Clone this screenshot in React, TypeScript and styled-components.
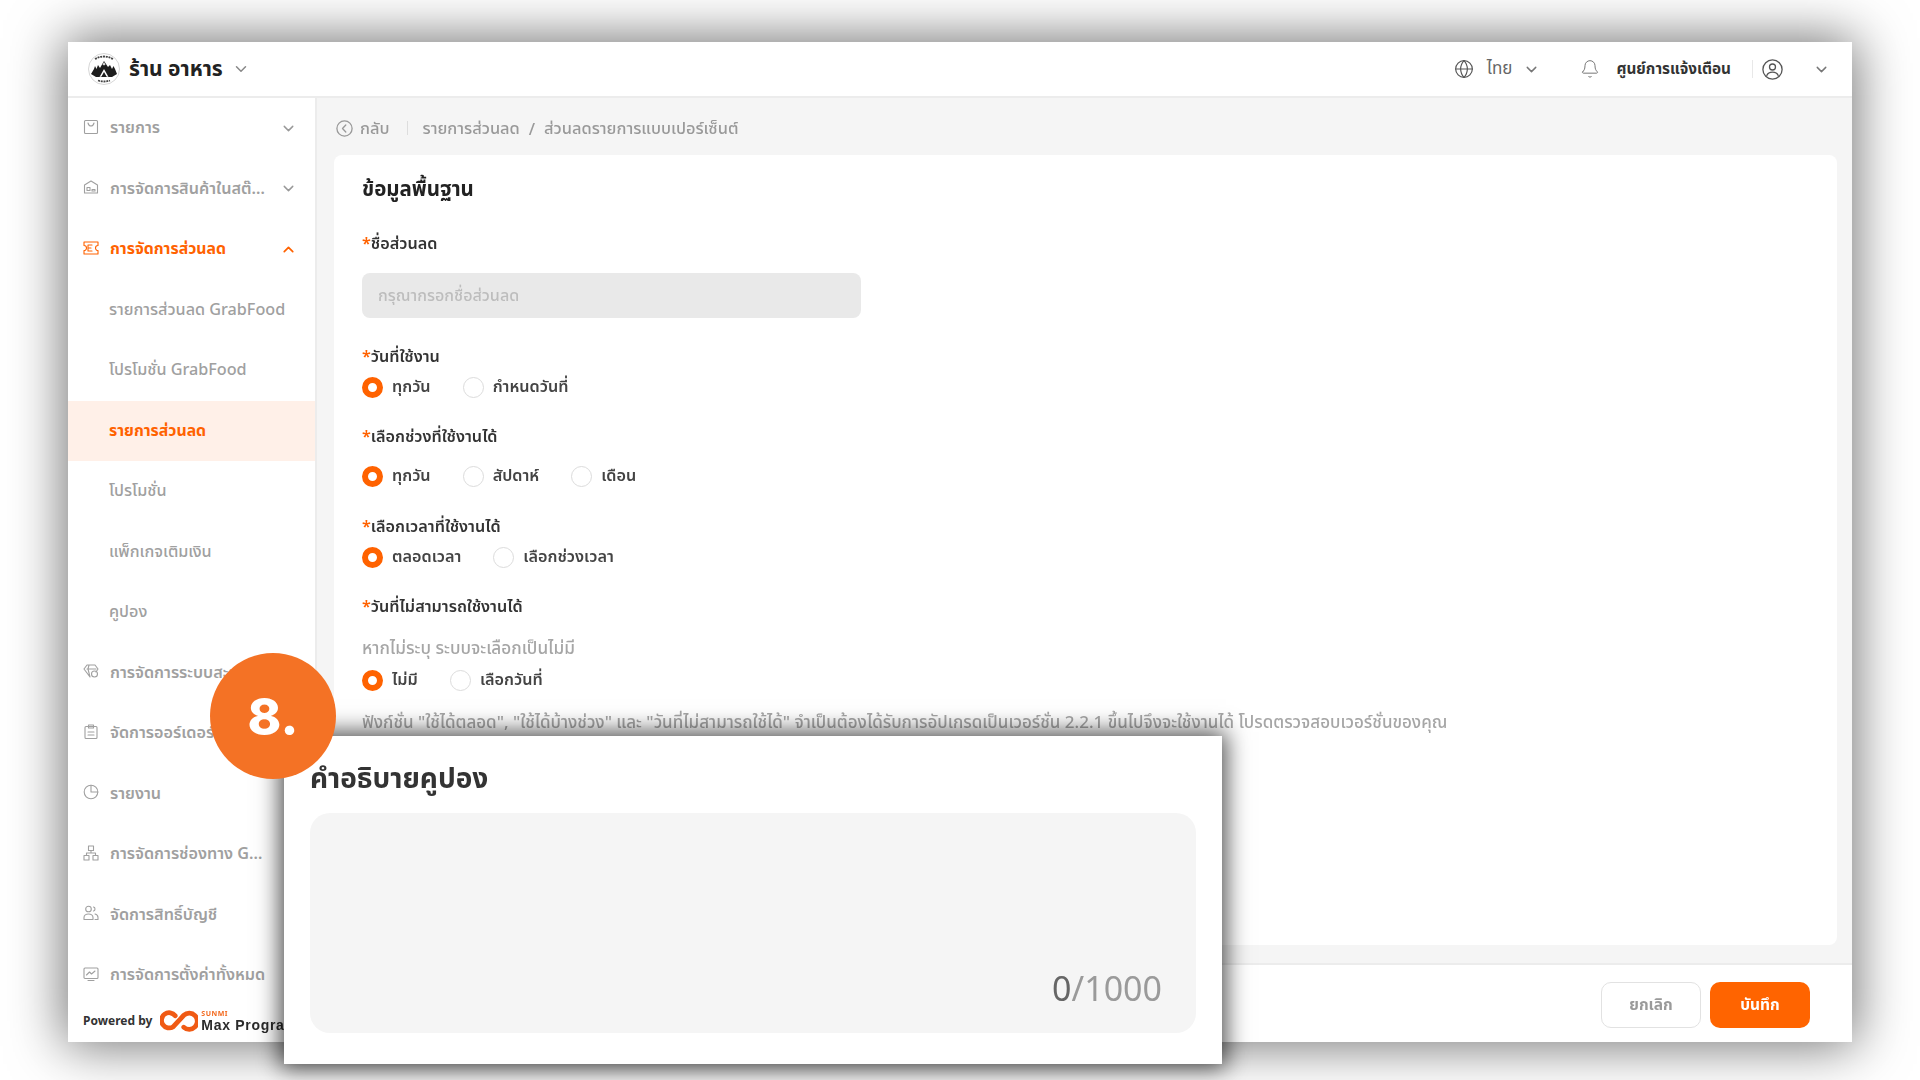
import React from "react";
import styled, { createGlobalStyle } from "styled-components";
import { Bell, ChevronDown, ChevronUp, Globe } from "lucide-react";

const Global = createGlobalStyle`
  html, body { margin: 0; padding: 0; background: #fff; }
  body { font-family: "Noto Sans", "Noto Sans Thai", "Inter", "DejaVu Sans", sans-serif; }
  #root { width: 1920px; height: 1080px; overflow: hidden; }
  * { box-sizing: border-box; }
`;

const Page = styled.div`
  position: relative;
  width: 1920px;
  height: 1080px;
  padding: 42px 68px 38px;
  overflow: hidden;
  filter: blur(0.35px);
`;
const Win = styled.div`
  width: 1784px;
  height: 1000px;
  display: flex;
  flex-direction: column;
  background: #f5f5f5;
  box-shadow: 0 0 50px 4px rgba(0, 0, 0, 0.55);
`;
const Header = styled.header`
  height: 56px;
  flex: none;
  display: flex;
  align-items: center;
  background: #fff;
  border-bottom: 2px solid #ececec;
  padding: 0 22px 0 20px;
  color: #444;
`;
const StoreName = styled.span`
  font-size: 21px;
  font-weight: 700;
  color: #222;
  margin-left: 9px;
  margin-right: 9px;
`;
const Spacer = styled.div`
  flex: 1;
`;
const Lang = styled.span`
  font-size: 17px;
  color: #666;
  margin: 0 11px 0 13px;
`;
const NoticeText = styled.span`
  font-size: 15.3px;
  font-weight: 700;
  color: #333;
  margin-left: 16px;
`;
const Divider = styled.span`
  width: 1px;
  height: 18px;
  background: #e8e8e8;
  margin: 0 9px 0 21px;
`;
const Body = styled.div`
  flex: 1;
  min-height: 0;
  display: flex;
`;
const Side = styled.aside`
  width: 249px;
  flex: none;
  background: #fff;
  border-right: 2px solid #ececec;
  display: flex;
  flex-direction: column;
`;
const Row = styled.div<{ $active?: boolean; $selected?: boolean }>`
  height: 60.5px;
  flex: none;
  display: flex;
  align-items: center;
  padding: 0 18px 0 15px;
  gap: 11px;
  font-size: ${(p) => (p.$active ? 15.8 : 16.2)}px;
  font-weight: ${(p) => (p.$active ? 700 : 600)};
  color: ${(p) => (p.$active || p.$selected ? "#ff6200" : "#a0a0a0")};
  background: ${(p) => (p.$selected ? "#fff0e8" : "transparent")};
  white-space: nowrap;
  svg { flex: none; }
`;
const SubRow = styled(Row)`
  padding-left: 41px;
  font-weight: ${(p) => (p.$selected ? 700 : 500)};
  font-size: ${(p) => (p.$selected ? 15.8 : 16.2)}px;
`;
const RowText = styled.span`
  max-width: 158px;
  overflow: hidden;
  text-overflow: ellipsis;
`;
const ChevSlot = styled.span`
  margin-left: auto;
  display: flex;
`;
const Powered = styled.div`
  display: flex;
  align-items: center;
  padding: 3px 0 0 15px;
  font-size: 12px;
  font-weight: 700;
  color: #333;
  white-space: nowrap;
`;
const Brand = styled.div`
  display: flex;
  flex-direction: column;
  margin-left: 3px;
  line-height: 1;
`;
const BrandTop = styled.span`
  font-size: 7px;
  letter-spacing: 0.5px;
  color: #f36a1f;
  margin-bottom: 1px;
`;
const BrandName = styled.span`
  font-family: "Liberation Sans", sans-serif;
  font-size: 14px;
  font-weight: 700;
  letter-spacing: 0.7px;
  color: #2b2b2b;
`;
const Main = styled.div`
  flex: 1;
  min-width: 0;
  display: flex;
  flex-direction: column;
`;
const Crumbs = styled.div`
  height: 57px;
  flex: none;
  display: flex;
  align-items: center;
  padding: 3px 0 0 19px;
  font-size: 16.4px;
  color: #999;
  font-weight: 500;
`;
const Back = styled.span`
  margin-left: 7px;
`;
const CrumbBar = styled.span`
  width: 1px;
  height: 14px;
  background: #ddd;
  margin: 0 15px 0 17px;
`;
const Slash = styled.span`
  margin: 0 9px;
`;
const Card = styled.section`
  height: 790px;
  flex: none;
  margin: 0 15px 0 17px;
  background: #fff;
  border-radius: 8px;
  padding: 21px 28px;
`;
const Title = styled.h2`
  margin: 0;
  height: 24px;
  line-height: 24px;
  font-size: 20.5px;
  font-weight: 700;
  color: #222;
`;
const Label = styled.div<{ $mt: number }>`
  margin-top: ${(p) => p.$mt}px;
  height: 22px;
  line-height: 22px;
  font-size: 16.2px;
  font-weight: 600;
  color: #333;
  &::before {
    content: "*";
    color: #ff6200;
  }
`;
const Input = styled.div`
  margin-top: 19px;
  width: 499px;
  height: 45px;
  border-radius: 8px;
  background: #e9e9e9;
  color: #bdbdbd;
  font-size: 16.1px;
  font-weight: 500;
  line-height: 45px;
  padding-left: 16px;
`;
const Radios = styled.div<{ $mt: number }>`
  margin-top: ${(p) => p.$mt}px;
  height: 24px;
  display: flex;
  align-items: center;
  gap: 32px;
`;
const RadioItem = styled.label`
  display: flex;
  align-items: center;
  gap: 9px;
  font-size: 16.2px;
  font-weight: 600;
  color: #444;
`;
const Dot = styled.span<{ $on?: boolean }>`
  width: 21px;
  height: 21px;
  border-radius: 50%;
  background: #fff;
  border: ${(p) => (p.$on ? "6.5px solid #ff6200" : "1.5px solid #dcdcdc")};
`;
const Hint = styled.div<{ $mt: number; $size: number }>`
  margin-top: ${(p) => p.$mt}px;
  height: 22px;
  line-height: 22px;
  font-size: ${(p) => p.$size}px;
  font-weight: 500;
  color: #a6a6a6;
  white-space: nowrap;
`;
const Footer = styled.footer`
  margin-top: 18px;
  flex: 1;
  display: flex;
  align-items: flex-start;
  justify-content: flex-end;
  gap: 9px;
  padding: 17px 42px 0 0;
  background: #fff;
  border-top: 2px solid #ececec;
`;
const Btn = styled.button<{ $primary?: boolean }>`
  width: 100px;
  height: 46px;
  border-radius: 10px;
  font-family: inherit;
  font-size: 15.5px;
  font-weight: 700;
  border: ${(p) => (p.$primary ? "none" : "1.5px solid #e2e2e2")};
  background: ${(p) => (p.$primary ? "#ff6400" : "#fff")};
  color: ${(p) => (p.$primary ? "#fff" : "#9a9a9a")};
`;
const Modal = styled.div`
  position: absolute;
  left: 284px;
  top: 736px;
  width: 938px;
  height: 328px;
  background: #fff;
  padding: 21px 26px;
  box-shadow: 0 0 22px 4px rgba(0, 0, 0, 0.7);
  display: flex;
  flex-direction: column;
`;
const ModalTitle = styled.h3`
  margin: 0;
  height: 40px;
  line-height: 40px;
  font-size: 28px;
  font-weight: 700;
  color: #333;
`;
const TextBox = styled.div`
  margin-top: 16px;
  height: 220px;
  border-radius: 20px;
  background: #f5f5f5;
  display: flex;
  align-items: flex-end;
  justify-content: flex-end;
  padding: 0 34px 23px 0;
  font-size: 34px;
  color: #9a9a9a;
  line-height: 44px;
`;
const CountNow = styled.span`
  color: #666;
`;
const Badge = styled.div`
  position: absolute;
  left: 210px;
  top: 653px;
  width: 126px;
  height: 126px;
  border-radius: 50%;
  background: #f47225;
  color: #fff;
  display: flex;
  align-items: center;
  justify-content: center;
  font-family: "Inter", sans-serif;
  font-size: 51px;
  font-weight: 800;
`;

type IconP = { d: React.ReactNode };
const Ico = ({ d }: IconP) => (
  <svg width="16" height="16" viewBox="0 0 16 16" fill="none" stroke="currentColor" strokeWidth="1.1" strokeLinecap="round" strokeLinejoin="round" style={{ marginTop: -3 }}>
    {d}
  </svg>
);
const icons = {
  bag: <><rect x="1.500" y="1.500" width="13" height="13" rx="1" /><path d="M5 4c.5 2 1.500 3 3 3s2.500-1 3-3" /></>,
  store: <><path d="M1.500 14V6l6.500-4 6.500 4v8z" /><rect x="4" y="8.500" width="3" height="3" /><path d="M9 10.500h3v1.500H9z" /></>,
  ticket: <><path d="M1 2h14v3.500a2.500 2.500 0 0 0 0 5V14H1v-3.500a2.500 2.500 0 0 0 0-5z" /><path d="M5 5h4M5 8h3M5 11h4M5 5v6" /></>,
  points: <><path d="M4 2h8l3 4-2 3M1 6l3-4M1 6l6 8M4 6h9M6 2 5 6l2 8" /><circle cx="11.500" cy="11" r="3" /></>,
  order: <><rect x="2" y="2.500" width="12" height="12" rx="1" /><rect x="5.500" y="1" width="5" height="3" /><path d="M5 8h6M5 11h6" /></>,
  report: <><circle cx="8" cy="8" r="6.800" /><path d="M8 1.200V8h6.800" /></>,
  tree: <><rect x="5.500" y="1" width="5" height="4.500" /><rect x="1" y="10.500" width="5" height="4.500" /><rect x="10" y="10.500" width="5" height="4.500" /><path d="M8 5.500V8M3.500 10.500V8h9v2.500" /></>,
  users: <><circle cx="5.500" cy="4" r="2.800" /><path d="M1 14.500v-2c0-2 2-3.500 4.500-3.500S10 10.500 10 12.500v2zM10.500 2c2 .5 2 3.500 0 4M12 9c2 .5 3 1.700 3 3.500v2h-3" /></>,
  monitor: <><rect x="1" y="2" width="14" height="10.500" rx="1" /><path d="M3.500 9l3-3 2 2 3.500-3M5 14.500h6" /></>,
};

const Logo = () => (
  <svg width="32" height="32" viewBox="0 0 32 32">
    <circle cx="16" cy="16" r="15.500" fill="#fff" stroke="#bbb" strokeWidth=".6" />
    <path d="M3 21 6 16 7 13 8.500 16 10 12 12 15 16 8 20 14 22 12 24 16 25.500 13 27 16 29 21 24 24H8z" fill="#1d1d1d" />
    <path d="M14.500 11.500 16 9l1.500 2.500-1.500 1z" fill="#ddd" />
    <path d="M11.500 24 16 16l4.500 8-2-.5L16 19l-2.500 4.500z" fill="#fff" />
    <path d="M7 6q9-5 18 0" fill="none" stroke="#444" strokeWidth="1.800" strokeDasharray="2 .8" />
    <path d="M10 27.500q6 2 12 0" fill="none" stroke="#444" strokeWidth="1.800" strokeDasharray="2 .8" />
  </svg>
);
const UserCircle = () => (
  <svg width="21" height="21" viewBox="0 0 21 21" fill="none" stroke="#555" strokeWidth="1.300" strokeLinecap="round">
    <circle cx="10.500" cy="10.500" r="9.600" />
    <circle cx="10.500" cy="8" r="3" />
    <path d="M4.800 16.500c1-2.500 3-3.300 5.700-3.300s4.700.8 5.700 3.300" />
  </svg>
);
const BackIcon = () => (
  <svg width="17" height="17" viewBox="0 0 17 17" fill="none" stroke="#999" strokeWidth="1.300" strokeLinecap="round" strokeLinejoin="round">
    <circle cx="8.500" cy="8.500" r="7.600" />
    <path d="M9.800 5 6.500 8.500l3.300 3.500" />
  </svg>
);
const Infinity8 = () => (
  <svg width="38" height="24" viewBox="0 0 40 24" fill="none" stroke="#f05a14" strokeWidth="5" strokeLinecap="round" style={{ marginLeft: 8 }}>
    <path d="M16 6.500A8 8 0 1 0 14 18l11-12a8.500 8.500 0 1 1 0 12.500" />
  </svg>
);

const Chev = () => <ChevronDown size={17} strokeWidth={2} color="#999" />;

const NavRow = ({ icon, text, active, chev }: { icon: keyof typeof icons; text: string; active?: boolean; chev?: "up" | "down" }) => (
  <Row $active={active}>
    <Ico d={icons[icon]} />
    <RowText>{text}</RowText>
    {chev && (
      <ChevSlot>
        {chev === "down" ? <Chev /> : <ChevronUp size={17} strokeWidth={2.4} color="#ff6200" />}
      </ChevSlot>
    )}
  </Row>
);

const Radio = ({ on, children }: { on?: boolean; children: string }) => (
  <RadioItem>
    <Dot $on={on} />
    {children}
  </RadioItem>
);

export default function App() {
  return (
    <Page>
      <Global />
      <Win>
        <Header>
          <Logo />
          <StoreName>ร้าน อาหาร</StoreName>
          <ChevronDown size={18} strokeWidth={2} color="#888" />
          <Spacer />
          <Globe size={20} strokeWidth={1.4} color="#555" />
          <Lang>ไทย</Lang>
          <ChevronDown size={17} strokeWidth={2} color="#777" style={{ marginRight: 40 }} />
          <Bell size={20} strokeWidth={1.2} color="#777" />
          <NoticeText>ศูนย์การแจ้งเตือน</NoticeText>
          <Divider />
          <UserCircle />
          <ChevronDown size={17} strokeWidth={2} color="#777" style={{ marginLeft: 30 }} />
        </Header>
        <Body>
          <Side>
            <NavRow icon="bag" text="รายการ" chev="down" />
            <NavRow icon="store" text="การจัดการสินค้าในสต๊อก" chev="down" />
            <NavRow icon="ticket" text="การจัดการส่วนลด" active chev="up" />
            <SubRow>รายการส่วนลด GrabFood</SubRow>
            <SubRow>โปรโมชั่น GrabFood</SubRow>
            <SubRow $selected>รายการส่วนลด</SubRow>
            <SubRow>โปรโมชั่น</SubRow>
            <SubRow>แพ็กเกจเติมเงิน</SubRow>
            <SubRow>คูปอง</SubRow>
            <NavRow icon="points" text="การจัดการระบบสะสมแต้ม" />
            <NavRow icon="order" text="จัดการออร์เดอร์" />
            <NavRow icon="report" text="รายงาน" />
            <NavRow icon="tree" text="การจัดการช่องทาง GrabFood" />
            <NavRow icon="users" text="จัดการสิทธิ์บัญชี" />
            <NavRow icon="monitor" text="การจัดการตั้งค่าทั้งหมด" />
            <Powered>
              Powered by
              <Infinity8 />
              <Brand>
                <BrandTop>SUNMI</BrandTop>
                <BrandName>Max Program</BrandName>
              </Brand>
            </Powered>
          </Side>
          <Main>
            <Crumbs>
              <BackIcon />
              <Back>กลับ</Back>
              <CrumbBar />
              รายการส่วนลด
              <Slash>/</Slash>
              ส่วนลดรายการแบบเปอร์เซ็นต์
            </Crumbs>
            <Card>
              <Title>ข้อมูลพื้นฐาน</Title>
              <Label $mt={32}>ชื่อส่วนลด</Label>
              <Input>กรุณากรอกชื่อส่วนลด</Input>
              <Label $mt={27}>วันที่ใช้งาน</Label>
              <Radios $mt={8}>
                <Radio on>ทุกวัน</Radio>
                <Radio>กำหนดวันที่</Radio>
              </Radios>
              <Label $mt={26}>เลือกช่วงที่ใช้งานได้</Label>
              <Radios $mt={17}>
                <Radio on>ทุกวัน</Radio>
                <Radio>สัปดาห์</Radio>
                <Radio>เดือน</Radio>
              </Radios>
              <Label $mt={27}>เลือกเวลาที่ใช้งานได้</Label>
              <Radios $mt={8}>
                <Radio on>ตลอดเวลา</Radio>
                <Radio>เลือกช่วงเวลา</Radio>
              </Radios>
              <Label $mt={26}>วันที่ไม่สามารถใช้งานได้</Label>
              <Hint $mt={20} $size={17.2}>หากไม่ระบุ ระบบจะเลือกเป็นไม่มี</Hint>
              <Radios $mt={9}>
                <Radio on>ไม่มี</Radio>
                <Radio>เลือกวันที่</Radio>
              </Radios>
              <Hint $mt={19} $size={17}>
                ฟังก์ชั่น "ใช้ได้ตลอด", "ใช้ได้บ้างช่วง" และ "วันที่ไม่สามารถใช้ได้" จำเป็นต้องได้รับการอัปเกรดเป็นเวอร์ชั่น 2.2.1 ขึ้นไปจึงจะใช้งานได้ โปรดตรวจสอบเวอร์ชั่นของคุณ
              </Hint>
            </Card>
            <Footer>
              <Btn>ยกเลิก</Btn>
              <Btn $primary>บันทึก</Btn>
            </Footer>
          </Main>
        </Body>
      </Win>
      <Modal>
        <ModalTitle>คำอธิบายคูปอง</ModalTitle>
        <TextBox>
          <span>
            <CountNow>0</CountNow>/1000
          </span>
        </TextBox>
      </Modal>
      <Badge>8.</Badge>
    </Page>
  );
}
